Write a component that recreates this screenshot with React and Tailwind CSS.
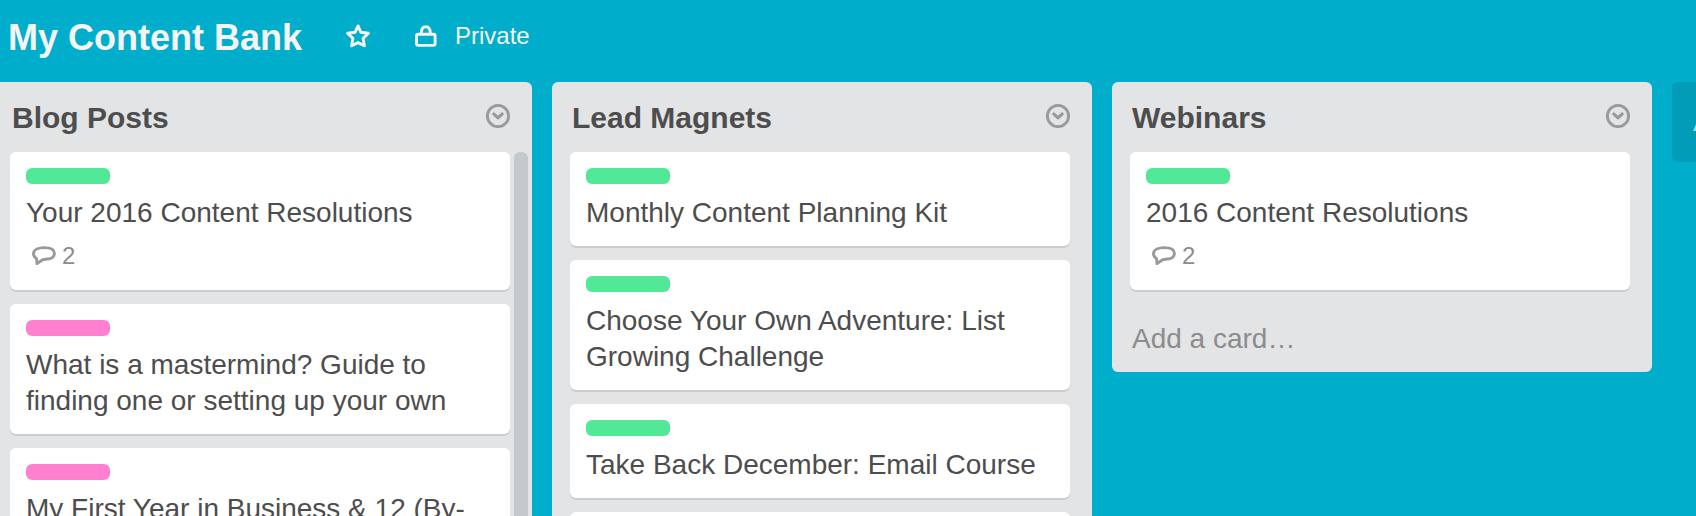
const LABEL_COLORS = {
  green: "bg-[#51e898]",
  pink: "bg-[#ff80ce]",
};

const LISTS = [
  {
    name: "Blog Posts",
    scrolls: true,
    fills: true,
    cards: [
      { label: "green", title: "Your 2016 Content Resolutions", comments: 2 },
      { label: "pink", title: "What is a mastermind? Guide to finding one or setting up your own" },
      { label: "pink", title: "My First Year in Business & 12 (By-" },
    ],
  },
  {
    name: "Lead Magnets",
    fills: true,
    cards: [
      { label: "green", title: "Monthly Content Planning Kit" },
      { label: "green", title: "Choose Your Own Adventure: List Growing Challenge" },
      { label: "green", title: "Take Back December: Email Course" },
      { label: "green", title: "" },
    ],
  },
  {
    name: "Webinars",
    cards: [{ label: "green", title: "2016 Content Resolutions", comments: 2 }],
  },
];

function StarIcon() {
  return (
    <svg width="24" height="24" viewBox="0 0 24 24" fill="none" stroke="currentColor" strokeWidth="2.9" strokeLinejoin="round" aria-hidden="true">
      <path d="M12 1.9 L14.9 8.3 L22.4 9.2 L17.1 14.4 L18.4 21.8 L12 18.6 L5.6 21.8 L6.9 14.4 L1.6 9.2 L9.1 8.3 Z" />
    </svg>
  );
}

function LockIcon() {
  return (
    <svg width="22" height="22" viewBox="0 0 22 22" fill="none" stroke="currentColor" strokeWidth="2.9" aria-hidden="true">
      <rect x="1.5" y="9.2" width="18.6" height="11.2" rx="1.8" />
      <path d="M6.2 9 C6.2 4 7.8 1.7 10.8 1.7 C13.8 1.7 15.4 4 15.4 9" />
    </svg>
  );
}

function MenuIcon() {
  return (
    <svg width="24" height="24" viewBox="0 0 24 24" fill="none" stroke="currentColor" strokeLinecap="round" strokeLinejoin="round" aria-hidden="true">
      <circle cx="12" cy="12" r="10.6" strokeWidth="2.8" />
      <path d="M7.8 10 L12 13.8 L16.2 10" strokeWidth="3.1" />
    </svg>
  );
}

function CommentIcon() {
  return (
    <svg width="24" height="20" viewBox="0 0 24 20" fill="none" stroke="currentColor" strokeWidth="2.9" strokeLinejoin="round" aria-hidden="true">
      <path d="M4.9 17.6 C5 15.6 4.9 14 4.4 12.4 C2.5 11.2 1.5 9.7 1.5 7.7 C1.5 3.8 6 1.6 12.2 1.6 C18.6 1.6 22.4 3.8 22.4 7.4 C22.4 11.4 18.5 13.3 13 13.3 C9.2 13.3 8 16.2 4.9 17.6 Z" />
    </svg>
  );
}

function Card({ label, title, comments }) {
  return (
    <li className="rounded-md bg-white px-4 pt-4 pb-[15px] shadow-[0_2px_0_#cccccc]">
      <div className={`h-4 w-[84px] rounded-md ${LABEL_COLORS[label]}`} />
      <a href="#" className="mt-[11px] block min-h-9 text-[28px] leading-9 text-[#4d4d4d]">{title}</a>
      {comments && (
        <p className="flex h-11 items-start gap-1.5 pl-1.5 text-2xl leading-8 text-[#8c8c8c]">
          <span className="pt-[15px] text-[#999999]"><CommentIcon /></span>
          <span className="pt-[9px]">{comments}</span>
        </p>
      )}
    </li>
  );
}

function List({ name, cards, scrolls, fills }) {
  return (
    <section className={`flex w-[540px] shrink-0 flex-col bg-[#e2e4e6] ${fills ? "h-full rounded-t-md" : "rounded-md"}`}>
      <header className="flex h-[70px] shrink-0 items-center justify-between pt-0.5 pr-[22px] pl-5">
        <h2 className="text-[30px] leading-9 font-bold text-[#4d4d4d]">{name}</h2>
        <button type="button" aria-label={`${name} menu`} className="pb-1 text-[#999999]">
          <MenuIcon />
        </button>
      </header>
      <div className={`flex gap-1 pl-[18px] ${fills ? "min-h-0 grow overflow-hidden" : ""} ${scrolls ? "pr-1" : "pr-[22px]"}`}>
        <ul className="flex grow flex-col gap-3.5">
          {cards.map((card, i) => <Card key={i} {...card} />)}
        </ul>
        {/* scroll thumb */}
        {scrolls && <div className="w-3.5 shrink-0 rounded-t-md bg-[#c4c9cc]" />}
      </div>
      {!fills && (
        <button type="button" className="mt-[31px] mb-[15px] pl-5 text-left text-[28px] leading-9 text-[#8c8c8c]">
          Add a card…
        </button>
      )}
    </section>
  );
}

export default function App() {
  return (
    <div className="flex h-screen flex-col overflow-hidden bg-[#00aecc] font-['Liberation_Sans',Arial,sans-serif]">
      <header className="flex h-[82px] shrink-0 items-start px-2 pt-4 text-[#f5f5f5]">
        <h1 className="text-4xl leading-[44px] font-bold">My Content Bank</h1>
        <button type="button" aria-label="Star board" className="ml-11 pt-2">
          <StarIcon />
        </button>
        <button type="button" className="ml-[45px] flex items-center gap-[18px] pt-0.5 text-2xl leading-9">
          <LockIcon />
          Private
        </button>
      </header>
      {/* the board is scrolled a little to the right */}
      <main className="-ml-2 flex min-h-0 grow items-start gap-5">
        {LISTS.map(list => <List key={list.name} {...list} />)}
        <button type="button" className="h-20 w-[540px] shrink-0 rounded-md bg-[#009cb8] px-[21px] text-left text-[28px] text-[#a6dde8]">
          Add a list…
        </button>
      </main>
    </div>
  );
}
